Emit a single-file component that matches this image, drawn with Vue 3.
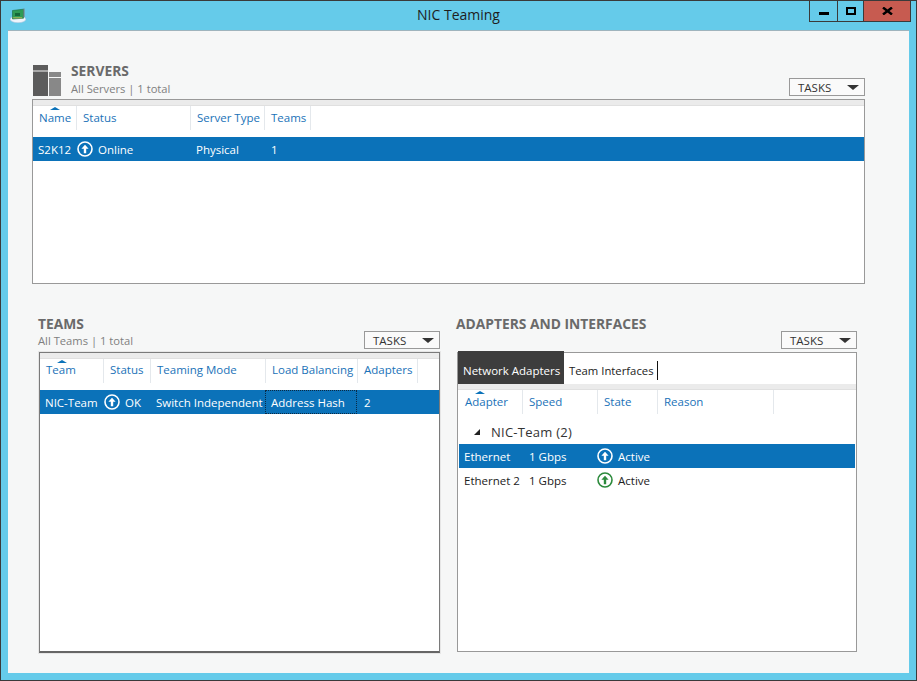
<script setup>
const serverCols = ['Name', 'Status', 'Server Type', 'Teams']
const teamCols = ['Team', 'Status', 'Teaming Mode', 'Load Balancing', 'Adapters']
const adapterCols = ['Adapter', 'Speed', 'State', 'Reason']
const upArrow = 'M8 3.8 11.6 7.7H9.2V12.2H6.8V7.7H4.4Z'
</script>

<template>
  <div class="window">
    <header class="titlebar">
      <svg class="app-icon" viewBox="0 0 16 15" width="16" height="15">
        <ellipse cx="8" cy="11.2" rx="7.8" ry="3.6" fill="#eef4fb" stroke="#a9c2dc" stroke-width=".6" />
        <path d="M2.5 2.5 13.5 1.2V10.2L2.5 11Z" fill="#2e9b55" stroke="#17683a" stroke-width=".6" />
        <path d="M5 5h5v3H5z" fill="#14693a" />
        <path d="M3.2 9.8h9" stroke="#d9c35a" stroke-width=".8" />
        <path d="M14 .5V9" stroke="#7d7d7d" />
      </svg>
      <h1 class="window-title">NIC Teaming</h1>
      <div class="window-buttons">
        <button class="wbtn min"><span class="min-mark"></span></button>
        <button class="wbtn max"><span class="max-mark"></span></button>
        <button class="wbtn close">
          <svg viewBox="0 0 11 8" width="11" height="8"><path d="M1 .5 10 7.5M10 .5 1 7.5" stroke="#000" stroke-width="2.4" fill="none" /></svg>
        </button>
      </div>
    </header>

    <main class="panel">
      <section class="servers">
        <div class="servers-head">
          <svg class="servers-icon" viewBox="0 0 30 31" width="30" height="31">
            <rect x="0" y="0" width="15" height="5.5" fill="#5c5c5c" />
            <rect x="0" y="6.5" width="15" height="24.5" fill="#5c5c5c" />
            <rect x="16" y="7" width="12" height="5" fill="#888" />
            <rect x="16" y="13" width="12" height="18" fill="#888" />
          </svg>
          <div class="head-text">
            <h2 class="section-title">SERVERS</h2>
            <p class="section-sub">All Servers | 1 total</p>
          </div>
          <button class="tasks">TASKS<span class="caret"></span></button>
        </div>
        <div class="box server-box">
          <div class="strip"></div>
          <div class="cols server-grid">
            <div v-for="(c, i) in serverCols" :key="c" class="col">
              <span v-if="i === 0" class="sort"></span>{{ c }}
            </div>
          </div>
          <div class="row selected server-row">
            <span class="cell first">S2K12</span>
            <span class="cell status">
              <svg class="status-icon" viewBox="0 0 16 16" width="16" height="16"><circle cx="8" cy="8" r="7" /><path :d="upArrow" /></svg>
              Online
            </span>
            <span class="cell">Physical</span>
            <span class="cell">1</span>
          </div>
        </div>
      </section>

      <div class="lower">
        <section class="teams">
          <h2 class="section-title">TEAMS</h2>
          <div class="sub-line">
            <p class="section-sub">All Teams | 1 total</p>
            <button class="tasks">TASKS<span class="caret"></span></button>
          </div>
          <div class="box team-box">
            <div class="strip"></div>
            <div class="cols team-grid">
              <div v-for="(c, i) in teamCols" :key="c" class="col">
                <span v-if="i === 0" class="sort"></span>{{ c }}
              </div>
            </div>
            <div class="row selected team-row">
              <span class="cell first">NIC-Team</span>
              <span class="cell status">
                <svg class="status-icon" viewBox="0 0 16 16" width="16" height="16"><circle cx="8" cy="8" r="7" /><path :d="upArrow" /></svg>
                OK
              </span>
              <span class="cell">Switch Independent</span>
              <span class="cell focus">Address Hash</span>
              <span class="cell">2</span>
            </div>
          </div>
        </section>

        <section class="adapters">
          <h2 class="section-title">ADAPTERS AND INTERFACES</h2>
          <div class="tasks-line">
            <button class="tasks">TASKS<span class="caret"></span></button>
          </div>
          <div class="box adapter-box">
            <div class="tabs">
              <span class="tab active">Network Adapters</span>
              <span class="tab">Team Interfaces</span>
            </div>
            <div class="strip"></div>
            <div class="cols adapter-grid">
              <div v-for="(c, i) in adapterCols" :key="c" class="col">
                <span v-if="i === 0" class="sort"></span>{{ c }}
              </div>
            </div>
            <div class="group"><span class="tri"></span>NIC-Team (2)</div>
            <div class="row selected adapter-row">
              <span class="cell first">Ethernet</span>
              <span class="cell">1 Gbps</span>
              <span class="cell status">
                <svg class="status-icon" viewBox="0 0 16 16" width="16" height="16"><circle cx="8" cy="8" r="7" /><path :d="upArrow" /></svg>
                Active
              </span>
            </div>
            <div class="row adapter-row">
              <span class="cell first">Ethernet 2</span>
              <span class="cell">1 Gbps</span>
              <span class="cell status">
                <svg class="status-icon green" viewBox="0 0 16 16" width="16" height="16"><circle cx="8" cy="8" r="7" /><path :d="upArrow" /></svg>
                Active
              </span>
            </div>
          </div>
        </section>
      </div>
    </main>
  </div>
</template>

<style>
html, body { margin: 0; background: #65cbea; }
</style>

<style scoped>
.window {
  box-sizing: border-box;
  width: 917px;
  height: 681px;
  border: 1px solid #3a3a3a;
  background: #65cbea;
  font-family: "Open Sans", "Noto Sans", sans-serif;
  font-size: 11.5px;
  color: #222;
  overflow: hidden;
}
.titlebar {
  height: 29px;
  display: grid;
  grid-template-columns: 1fr auto 1fr;
  align-items: start;
}
.app-icon { margin: 7px 0 0 9px; }
.window-title {
  margin: 4px 0 0;
  font-size: 14px;
  font-weight: 400;
  line-height: 19px;
  color: #1e1e1e;
}
.window-buttons {
  justify-self: end;
  display: flex;
  margin-right: 5px;
  height: 21px;
  border: 1px solid #3a3a3a;
  border-top: 0;
  box-sizing: border-box;
}
.wbtn {
  padding: 0;
  border: 0;
  background: transparent;
  display: flex;
  align-items: center;
  justify-content: center;
  width: 28px;
  border-right: 1px solid #3a3a3a;
  box-sizing: border-box;
}
.wbtn.max { width: 26px; }
.wbtn.close {
  width: 46px;
  border-right: 0;
  background: #c75b50;
}
.min-mark { width: 10px; height: 3px; background: #000; margin-top: 5px; }
.max-mark { width: 6px; height: 4px; border: 2px solid #000; }

.panel {
  box-sizing: border-box;
  margin-left: 7px;
  width: 901px;
  height: 643px;
  background: #f6f7f7;
  border-top: 1px solid #9fb4bd;
  padding: 34px 0 0 24px;
}
.servers { width: 833px; }
.servers-head {
  display: flex;
  height: 34px;
  align-items: flex-start;
}
.servers-icon { margin-left: 1px; }
.head-text { margin: -3px 0 0 8px; flex: 1; }
.section-title {
  margin: 0;
  font-size: 13.8px;
  line-height: 17px;
  font-weight: 700;
  color: #6a6a6a;
}
.section-sub {
  margin: 0;
  font-size: 11.2px;
  line-height: 16px;
  color: #7f7f7f;
}
.head-text .section-sub { margin-top: 2px; }
.tasks {
  box-sizing: border-box;
  width: 76px;
  height: 18px;
  padding: 0 5px 0 8px;
  border: 1px solid #999;
  background: #fafafa;
  display: flex;
  align-items: center;
  justify-content: space-between;
  font: inherit;
  color: #333;
}
.servers-head .tasks { margin-top: 13px; }
.caret {
  width: 0; height: 0;
  border-left: 6px solid transparent;
  border-right: 6px solid transparent;
  border-top: 5px solid #333;
}
.box {
  box-sizing: border-box;
  background: #fff;
  border: 1px solid #999;
  position: relative;
}
.server-box { height: 185px; }
.strip { height: 5px; background: #ebebeb; border-bottom: 1px solid #e0e0e0; }
.cols {
  height: 31px;
  display: grid;
  color: #1a72b8;
}
.col {
  position: relative;
  padding: 4px 0 0 6px;
  line-height: 16px;
  height: 20px;
  border-right: 1px solid #e4e8ec;
  white-space: nowrap;
}
.sort {
  position: absolute;
  left: 17px;
  top: 1px;
  width: 0; height: 0;
  border-left: 5px solid transparent;
  border-right: 5px solid transparent;
  border-bottom: 3px solid #0b72b9;
}
.server-grid { grid-template-columns: 44px 114px 74px 46px; }
.team-grid { grid-template-columns: 64px 47px 115px 92px 60px; }
.team-grid .col { padding-top: 3px; height: 21px; }
.adapter-grid { grid-template-columns: 65px 75px 60px 116px; }
.adapter-grid .col:first-child { padding-left: 7px; }
.row {
  height: 24px;
  display: grid;
  align-items: center;
  color: #222;
}
.server-row { grid-template-columns: 43px 114px 75px 46px; }
.team-row { grid-template-columns: 63px 47px 115px 92px 60px; }
.adapter-row { grid-template-columns: 64px 73px 120px; margin: 0 1px; }
.selected { background: #0b72b9; color: #fff; }
.cell {
  padding-left: 6px;
  white-space: nowrap;
  line-height: 23px;
  padding-top: 1px;
  height: 24px;
  box-sizing: border-box;
}
.cell.first { padding-left: 5px; }
.status {
  display: flex;
  align-items: flex-start;
  gap: 5px;
  padding-left: 1px;
}
.status-icon {
  flex: none;
  margin-top: 3px;
  fill: none;
  stroke: currentColor;
  stroke-width: 1.6;
  color: inherit;
}
.status-icon path { fill: currentColor; stroke: none; }
.status-icon.green { color: #2c8a3c; }
.lower {
  display: flex;
  margin-top: 32px;
  margin-left: 6px;
}
.teams { width: 402px; }
.adapters { width: 400px; margin-left: 17px; }
.teams .section-title, .adapters .section-title { margin: -1px 0 1px; }
.adapters .section-title { margin-left: -1px; white-space: nowrap; }
.sub-line {
  display: flex;
  justify-content: space-between;
  align-items: flex-start;
  height: 21px;
  margin-top: -2px;
}
.sub-line .section-sub { margin-top: 2px; }
.tasks-line {
  display: flex;
  justify-content: flex-end;
  height: 21px;
  margin-top: -2px;
}
.team-box {
  height: 301px;
  width: 401px;
  margin-left: 1px;
  border-color: #7a7a7a;
  border-bottom: 2px solid #666;
  box-shadow: 0 0 0 1px #e6e6e6;
}
.focus { outline: 1px dotted #0a2a44; outline-offset: -1px; }
.team-row .cell:nth-child(5) { padding-left: 7px; }
.adapter-box { height: 300px; width: 400px; }
.tabs {
  height: 31px;
  display: flex;
  align-items: flex-start;
}
.tab {
  font-size: 11.3px;
  line-height: 19px;
  margin-top: 8px;
  padding: 0 3px 0 5px;
  border-right: 1px solid #111;
  color: #222;
  white-space: nowrap;
}
.tab.active {
  font-size: 11.5px;
  background: #3d3d3d;
  color: #fff;
  border: 0;
  width: 106px;
  box-sizing: border-box;
  height: 33px;
  margin-top: -2px;
  padding-top: 10px;
}
.group {
  height: 23px;
  line-height: 23px;
  font-size: 13px;
  letter-spacing: .25px;
  color: #333;
  padding-left: 33px;
  position: relative;
}
.tri {
  position: absolute;
  left: 16px;
  top: 8px;
  width: 0; height: 0;
  border-left: 6px solid transparent;
  border-bottom: 6px solid #222;
}
</style>
